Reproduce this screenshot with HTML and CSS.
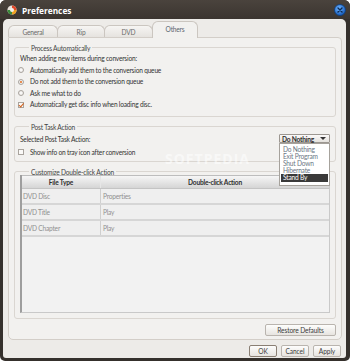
FILE: index.html
```html
<!DOCTYPE html>
<html>
<head>
<meta charset="utf-8">
<title>Preferences</title>
<link rel="stylesheet" href="styles.css">
</head>
<body>
<div class="window">
  <div class="titlebar">
    <svg class="app-icon" width="10" height="10" viewBox="0 0 10 10">
      <circle cx="5" cy="5" r="4.6" fill="#e8e2dc"/>
      <path d="M5 0.4 A4.6 4.6 0 0 1 9.6 5 L5 5 Z" fill="#e0482a"/>
      <path d="M9.6 5 A4.6 4.6 0 0 1 5 9.6 L5 5 Z" fill="#f0a020"/>
      <path d="M5 9.6 A4.6 4.6 0 0 1 0.4 5 L5 5 Z" fill="#3a8a3a"/>
      <circle cx="5" cy="5" r="2" fill="#f4f0ea"/>
    </svg>
    <span class="title">Preferences</span>
    <span class="spacer"></span>
    <svg class="close" width="12" height="12" viewBox="0 0 12 12">
      <defs>
        <radialGradient id="cg" cx="0.4" cy="0.35" r="0.7">
          <stop offset="0" stop-color="#6fb4ff"/>
          <stop offset="1" stop-color="#1257b8"/>
        </radialGradient>
      </defs>
      <circle cx="6" cy="6" r="5.5" fill="url(#cg)" stroke="#0d3f80" stroke-width="0.8"/>
      <path d="M4 4 L8 8 M8 4 L4 8" stroke="#0c2a52" stroke-width="1.4" stroke-linecap="round"/>
    </svg>
  </div>
  <div class="body">
    <div class="tabs">
      <div class="tab t-general">General</div>
      <div class="tab t-rip">Rip</div>
      <div class="tab t-dvd">DVD</div>
      <div class="tab active t-others">Others</div>
    </div>
    <div class="panel">
      <div class="group g1">
        <div class="legend">Process Automatically</div>
        <div class="line">When adding new items during conversion:</div>
        <div class="line opt"><span class="radio"></span>Automatically add them to the conversion queue</div>
        <div class="line opt"><span class="radio on"></span>Do not add them to the conversion queue</div>
        <div class="line opt"><span class="radio"></span>Ask me what to do</div>
        <div class="line opt"><span class="check on"></span>Automatically get disc info when loading disc.</div>
      </div>
      <div class="group g2">
        <div class="legend">Post Task Action</div>
        <div class="row1">
          <span>Selected Post Task Action:</span>
          <div class="select-wrap">
            <div class="select"><span>Do Nothing</span><span class="arrow"></span></div>
            <div class="dropdown">
              <div class="item">Do Nothing</div>
              <div class="item">Exit Program</div>
              <div class="item">Shut Down</div>
              <div class="item">Hibernate</div>
              <div class="item sel">Stand By</div>
            </div>
          </div>
        </div>
        <div class="row2 opt"><span class="check"></span>Show info on tray icon after conversion</div>
        <div class="watermark">SOFTPEDIA</div>
      </div>
      <div class="group g3">
        <div class="legend legend3">Customize Double-click Action</div>
        <div class="table">
          <div class="thead">
            <div class="c1">File Type</div>
            <div class="c2">Double-click Action</div>
          </div>
          <div class="tr"><div class="c1">DVD Disc</div><div class="c2">Properties</div></div>
          <div class="tr"><div class="c1">DVD Title</div><div class="c2">Play</div></div>
          <div class="tr"><div class="c1">DVD Chapter</div><div class="c2">Play</div></div>
        </div>
      </div>
      <div class="panel-foot">
        <button class="btn restore">Restore Defaults</button>
      </div>
    </div>
    <div class="foot">
      <button class="btn default">OK</button>
      <button class="btn">Cancel</button>
      <button class="btn">Apply</button>
    </div>
  </div>
</div>
</body>
</html>
```

FILE: styles.css
```css
* { box-sizing: border-box; }
html, body {
  margin: 0;
  padding: 0;
  background: #ffffff;
}
body {
  font-family: Lato, "Open Sans", sans-serif;
  font-size: 6.6px;
  letter-spacing: -0.2px;
  color: #333333;
}
.window {
  width: 350px;
  height: 361px;
  background: #35302c;
  border-radius: 6px 6px 5px 5px;
  display: flex;
  flex-direction: column;
}
.titlebar {
  height: 19px;
  display: flex;
  align-items: center;
  padding: 0 4px 0 7px;
  background: linear-gradient(#4a433d, #3b3530);
  border-radius: 6px 6px 0 0;
}
.app-icon { flex: none; margin-right: 5px; margin-top: 1px; }
.title {
  color: #ffffff;
  font-weight: bold;
  font-size: 8.3px;
  letter-spacing: 0;
  font-family: "Open Sans", sans-serif;
  margin-top: 1px;
}
.spacer { flex: 1; }
.close { flex: none; margin-top: 1px; }

.body {
  flex: 1;
  margin: 0 4px 3px 3px;
  background: #edebe8;
  border-radius: 5px 5px 3px 3px;
  padding: 2px 4px 1px 5px;
  display: flex;
  flex-direction: column;
}
.tabs {
  height: 16px;
  display: flex;
  align-items: flex-end;
  position: relative;
  z-index: 1;
}
.tab {
  height: 12px;
  border: 1px solid #cbc6c0;
  border-bottom: none;
  border-radius: 6px 6px 0 0;
  background: linear-gradient(#f6f5f3, #e6e3df);
  color: #6b6b6b;
  display: flex;
  align-items: center;
  justify-content: center;
  margin-right: -1px;
  font-size: 6.6px;
}
.t-general { width: 50px; }
.t-rip { width: 48px; }
.t-dvd { width: 49px; }
.t-others {
  width: 46px;
  padding-bottom: 3px;
  background: #f2f1ef;
  color: #5a6470;
  margin-bottom: -1px;
  height: 17px;
}
.panel {
  height: 303px;
  background: #f2f1ef;
  border: 1px solid #d3cec8;
  border-radius: 0 4px 5px 5px;
  padding: 9px 5px 3px 5px;
  display: flex;
  flex-direction: column;
}
.group {
  border: 1px solid #dad6d1;
  border-radius: 3px;
  padding: 0 5px;
  position: relative;
  display: flex;
  flex-direction: column;
  flex: none;
}
.legend {
  height: 10px;
  line-height: 10px;
  margin-top: -5px;
  margin-left: 9px;
  padding: 0 2px;
  background: #f2f1ef;
  align-self: flex-start;
  color: #444;
}
.g1 { height: 70px; }
.g1 .line {
  height: 11.5px;
  line-height: 11.5px;
  white-space: nowrap;
  flex: none;
}
.opt {
  display: flex;
  align-items: center;
}
.g1 .opt { margin-left: -2px; }
.radio {
  width: 6px;
  height: 6px;
  border-radius: 50%;
  border: 1px solid #a9a49e;
  background: radial-gradient(#ffffff, #e6e3df);
  margin-right: 6px;
  flex: none;
  display: flex;
  align-items: center;
  justify-content: center;
}
.radio.on::after {
  content: "";
  width: 2px;
  height: 2px;
  border-radius: 50%;
  background: #e06a1a;
}
.check {
  width: 6px;
  height: 6px;
  border: 1px solid #a9a49e;
  background: #fbfaf8;
  margin-right: 6px;
  flex: none;
  position: relative;
}
.check.on::after {
  content: "";
  position: absolute;
  left: 1px;
  top: -1px;
  width: 1.5px;
  height: 3.5px;
  border-right: 1.2px solid #d2601a;
  border-bottom: 1.2px solid #d2601a;
  transform: rotate(40deg);
}
.g2 {
  height: 36px;
  margin-top: 9px;
}
.row1 {
  height: 13px;
  display: flex;
  align-items: center;
  justify-content: space-between;
  flex: none;
}
.row2 {
  height: 14px;
  margin-left: -2px;
  flex: none;
}
.select-wrap {
  position: relative;
  width: 51px;
}
.select {
  height: 9px;
  border: 1px solid #9c9791;
  background: linear-gradient(#fbfaf9, #e4e1dd);
  border-radius: 1px;
  display: flex;
  align-items: center;
  justify-content: space-between;
  padding: 0 3px 0 2px;
  color: #2e2e2e;
  font-weight: bold;
  font-size: 6.6px;
}
.arrow {
  width: 0;
  height: 0;
  border-left: 3px solid transparent;
  border-right: 3px solid transparent;
  border-top: 3px solid #333;
}
.dropdown {
  position: absolute;
  left: 0;
  top: 9px;
  width: 51px;
  background: #ffffff;
  border: 1px solid #a6a29c;
  padding: 2px 0 3px 1px;
  z-index: 5;
}
.item {
  height: 7px;
  line-height: 7px;
  padding-left: 2px;
  color: #6c7684;
  font-size: 6.6px;
  white-space: nowrap;
}
.item.sel {
  background: #3a3a3a;
  color: #ffffff;
  margin-right: 1px;
  height: 7.5px;
}
.watermark {
  position: absolute;
  left: 150px;
  top: 22px;
  font-family: "Open Sans", sans-serif;
  font-weight: bold;
  font-size: 14px;
  letter-spacing: 1px;
  color: rgba(255, 255, 255, 0.55);
  z-index: 2;
}
.g3 {
  height: 148px;
  margin-top: 9px;
}
.legend3 {
  margin-bottom: -2px;
  position: relative;
  z-index: 0;
}
.table {
  position: relative;
  height: 138px;
  flex: none;
  background: #f2f2f2;
  border: 1px solid #c9c9c9;
  border-left: 2px solid #9e9e9e;
  border-top: none;
  display: flex;
  flex-direction: column;
}
.thead {
  height: 14px;
  display: flex;
  flex: none;
  background: linear-gradient(#f6f6f6, #d5d5d5);
  border-top: 1px solid #bdbdbd;
  border-bottom: 1px solid #c4c4c4;
  color: #2e2e2e;
  font-weight: bold;
  font-size: 6.6px;
}
.thead .c1, .thead .c2 {
  display: flex;
  align-items: center;
  justify-content: center;
}
.thead .c1 { width: 79px; border-right: 1px solid #e6e6e6; }
.thead .c2 { flex: 1; }
.tr {
  height: 16px;
  flex: none;
  display: flex;
  border-bottom: 2px solid #d6d6d6;
  background: #efefef;
  color: #8f8f8f;
}
.tr .c1 {
  width: 79px;
  border-right: 1px solid #cfcfcf;
  display: flex;
  align-items: center;
  padding-left: 1px;
}
.tr .c2 {
  flex: 1;
  display: flex;
  align-items: center;
  padding-left: 2px;
}
.panel-foot {
  margin-top: 5px;
  display: flex;
  justify-content: flex-end;
}
.btn {
  font-family: Lato, "Open Sans", sans-serif;
  font-size: 6.6px;
  letter-spacing: -0.1px;
  color: #3a3a3a;
  height: 12px;
  padding: 0;
  border: 1px solid #b9b4ae;
  border-radius: 2px;
  background: linear-gradient(#fdfdfc, #e7e4e0);
  display: flex;
  align-items: center;
  justify-content: center;
}
.restore { width: 71px; }
.foot {
  margin-top: 5px;
  height: 12px;
  display: flex;
  justify-content: flex-end;
  gap: 4px;
  padding-right: 1px;
}
.foot .btn { width: 28px; }
.foot .default { border-color: #8a7f74; }
```
